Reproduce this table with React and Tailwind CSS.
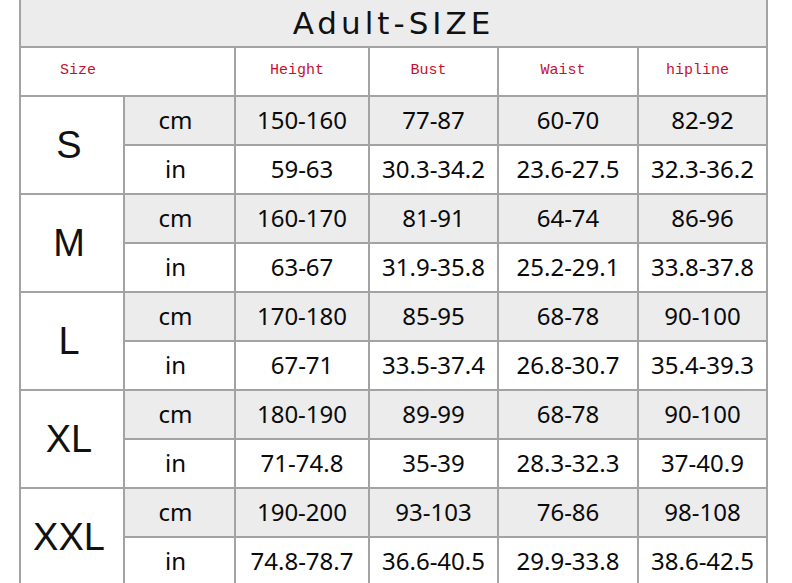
import React from "react";

const sizes = [
  {
    name: "S",
    cm: ["150-160", "77-87", "60-70", "82-92"],
    inch: ["59-63", "30.3-34.2", "23.6-27.5", "32.3-36.2"],
  },
  {
    name: "M",
    cm: ["160-170", "81-91", "64-74", "86-96"],
    inch: ["63-67", "31.9-35.8", "25.2-29.1", "33.8-37.8"],
  },
  {
    name: "L",
    cm: ["170-180", "85-95", "68-78", "90-100"],
    inch: ["67-71", "33.5-37.4", "26.8-30.7", "35.4-39.3"],
  },
  {
    name: "XL",
    cm: ["180-190", "89-99", "68-78", "90-100"],
    inch: ["71-74.8", "35-39", "28.3-32.3", "37-40.9"],
  },
  {
    name: "XXL",
    cm: ["190-200", "93-103", "76-86", "98-108"],
    inch: ["74.8-78.7", "36.6-40.5", "29.9-33.8", "38.6-42.5"],
  },
];

const headers = ["Height", "Bust", "Waist", "hipline"];

const cell =
  "flex items-center justify-center pb-[2px] text-[24px] text-[#0a0a0a] font-['Noto_Sans',sans-serif]";

export default function App() {
  return (
    <div className="w-[792px] h-[583px] overflow-hidden bg-white">
      <div className="ml-[19px] w-[749px] bg-[#a3a3a3] px-[2px] grid grid-cols-[102px_109px_132px_127px_138px_127px] grid-rows-[46px_repeat(11,47px)] gap-[2px]">
        {/* TITLE */}
        <div className="col-span-6 bg-[#ececec] flex items-center justify-center text-[31px] tracking-[4px] text-[#111] font-['DejaVu_Sans',sans-serif]">
          Adult-SIZE
        </div>

        {/* HEADER */}
        <div className="col-span-2 bg-white flex items-center pl-[39px] text-[15px] text-[#c8102e] font-['Liberation_Mono',monospace]">
          Size
        </div>
        {headers.map((h) => (
          <div
            key={h}
            className="bg-white flex items-center justify-center pr-[10px] text-[15px] text-[#c8102e] font-['Liberation_Mono',monospace]"
          >
            {h}
          </div>
        ))}

        {/* ROWS */}
        {sizes.map((s) => (
          <React.Fragment key={s.name}>
            <div className="row-span-2 bg-white flex items-center justify-center pr-[6px] text-[38px] text-[#111] font-['Liberation_Sans',sans-serif]">
              {s.name}
            </div>
            <div className={`${cell} pr-[8px] bg-[#ececec]`}>cm</div>
            {s.cm.map((v, i) => (
              <div key={"c" + i} className={`${cell} bg-[#ececec]`}>
                {v}
              </div>
            ))}
            <div className={`${cell} pr-[8px] bg-white`}>in</div>
            {s.inch.map((v, i) => (
              <div key={"i" + i} className={`${cell} bg-white`}>
                {v}
              </div>
            ))}
          </React.Fragment>
        ))}
      </div>
    </div>
  );
}
